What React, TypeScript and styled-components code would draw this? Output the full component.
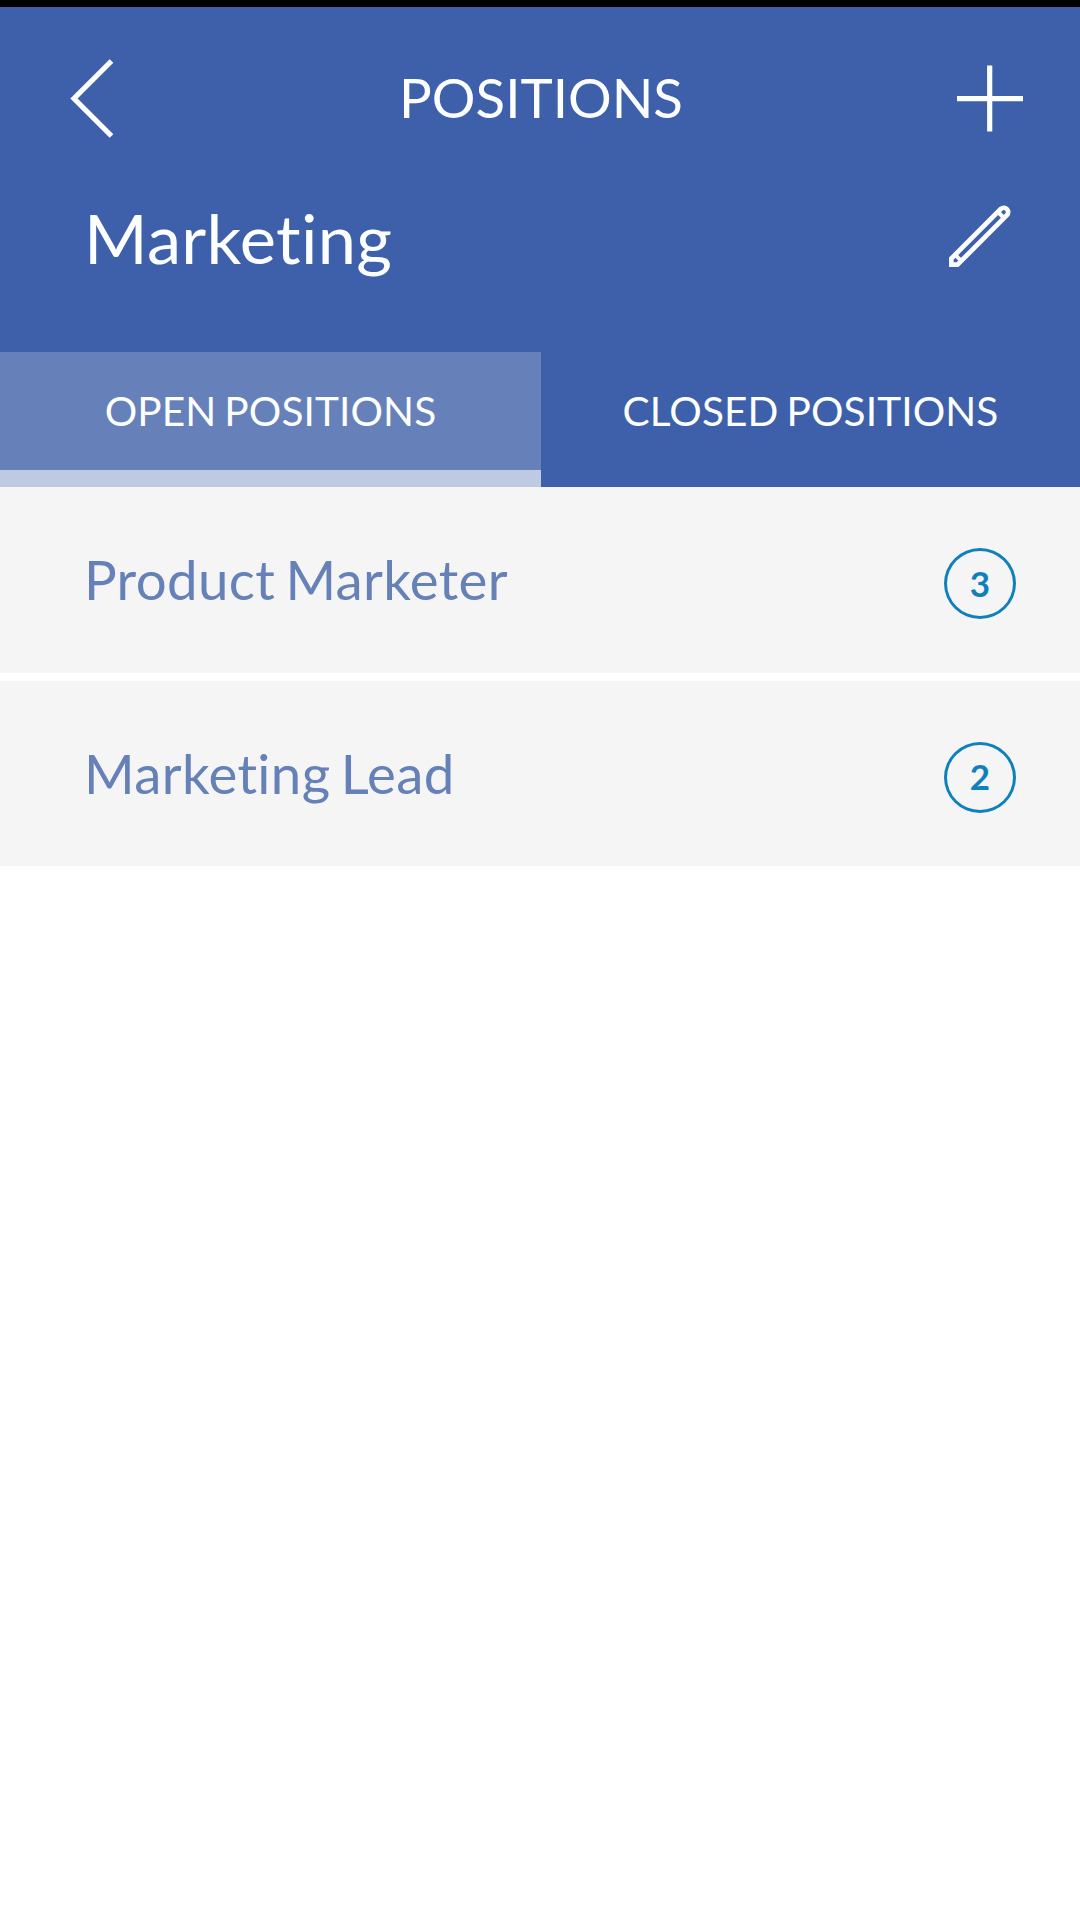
import React from 'react';
import styled, { createGlobalStyle } from 'styled-components';

const GlobalStyle = createGlobalStyle`
  * { box-sizing: border-box; }
  body {
    margin: 0;
    background: #ffffff;
    font-family: Lato, "Open Sans", sans-serif;
    font-variant-ligatures: none;
  }
  button {
    margin: 0;
    padding: 0;
    border: 0;
    background: none;
    font: inherit;
    font-variant-ligatures: none;
    color: inherit;
  }
`;

const Screen = styled.main`
  width: 1080px;
  min-height: 1916px;
  background: #ffffff;
`;

const StatusStrip = styled.div`
  height: 7px;
  background: #000000;
`;

const Header = styled.header`
  height: 480px;
  display: flex;
  flex-direction: column;
  background: #3e60aa;
  color: #fcfeff;
`;

const NavBar = styled.div`
  height: 182px;
  padding: 0 56px 0 70px;
  display: grid;
  grid-template-columns: 67px 1fr 67px;
  align-items: center;
`;

const NavTitle = styled.h1`
  margin: 0;
  padding: 0 12px 2px 0;
  text-align: center;
  font-size: 54.6px;
  line-height: 64px;
  font-weight: 400;
`;

const IconButton = styled.button`
  display: flex;
`;

const DepartmentBar = styled.div`
  height: 94px;
  padding: 0 69px 0 84px;
  display: flex;
  align-items: center;
  justify-content: space-between;
`;

const DepartmentName = styled.h2`
  margin: 0;
  padding-top: 3px;
  font-size: 68.6px;
  line-height: 82px;
  font-weight: 400;
  letter-spacing: 0.3px;
`;

const Tabs = styled.nav`
  margin-top: auto;
  height: 135px;
  display: grid;
  grid-template-columns: 541px 539px;
`;

const Tab = styled.button<{ $active?: boolean }>`
  border-bottom: 17px solid ${(p) => (p.$active ? '#bccae2' : 'transparent')};
  background-color: ${(p) => (p.$active ? '#6680ba' : '#3e60aa')};
  font-size: 40.6px;
  line-height: 48px;
  letter-spacing: 0.1px;
  word-spacing: -2.5px;
  text-align: center;
`;

const List = styled.ul`
  margin: 0;
  padding: 0;
  list-style: none;
  display: grid;
  gap: 8px;
`;

const Row = styled.li`
  height: 186px;
  padding: 0 64px 0 84px;
  display: flex;
  align-items: center;
  justify-content: space-between;
  background: #f5f5f5;

  &:last-child {
    height: 185px;
  }
`;

const RowTitle = styled.span`
  padding-bottom: 2px;
  font-size: 54.6px;
  line-height: 64px;
  letter-spacing: 0.35px;
  word-spacing: -4px;
  color: #6680b8;
`;

const Count = styled.span`
  width: 72px;
  height: 71px;
  margin-top: 7px;
  padding-bottom: 2px;
  display: flex;
  align-items: center;
  justify-content: center;
  border: 3px solid #0f80be;
  border-radius: 50%;
  font-size: 35px;
  line-height: 42px;
  font-weight: 700;
  color: #0f80be;
`;

const BackIcon = () => (
  <svg width="45" height="82" viewBox="0 0 45 82" fill="none">
    <path d="M41.5 4 4 41.5 41.5 79" stroke="currentColor" strokeWidth="5.2" />
  </svg>
);

const PlusIcon = () => (
  <svg width="66" height="68" viewBox="0 0 66 68" fill="none">
    <path d="M32.7 1.5v66M0 34.7h66" stroke="currentColor" strokeWidth="5.2" />
  </svg>
);

const PencilIcon = () => (
  <svg width="62" height="62" viewBox="0 0 62 62" fill="none" stroke="currentColor" strokeWidth="4.7">
    <path d="M2.35 59.65V53.5L51.9 3.8a4.4 4.4 0 0 1 6.2 6.2L8.5 59.65Z" />
    <path d="m5.5 49.2 7 7M48.5 6.5l7 7" strokeWidth="4" />
  </svg>
);

const positions = [
  { title: 'Product Marketer', count: 3 },
  { title: 'Marketing Lead', count: 2 },
];

export default function App() {
  return (
    <Screen>
      <GlobalStyle />
      <StatusStrip />
      <Header>
        <NavBar>
          <IconButton aria-label="Back">
            <BackIcon />
          </IconButton>
          <NavTitle>POSITIONS</NavTitle>
          <IconButton aria-label="Add position">
            <PlusIcon />
          </IconButton>
        </NavBar>
        <DepartmentBar>
          <DepartmentName>Marketing</DepartmentName>
          <IconButton aria-label="Edit department">
            <PencilIcon />
          </IconButton>
        </DepartmentBar>
        <Tabs>
          <Tab $active>OPEN POSITIONS</Tab>
          <Tab>CLOSED POSITIONS</Tab>
        </Tabs>
      </Header>
      <List>
        {positions.map((position) => (
          <Row key={position.title}>
            <RowTitle>{position.title}</RowTitle>
            <Count>{position.count}</Count>
          </Row>
        ))}
      </List>
    </Screen>
  );
}
